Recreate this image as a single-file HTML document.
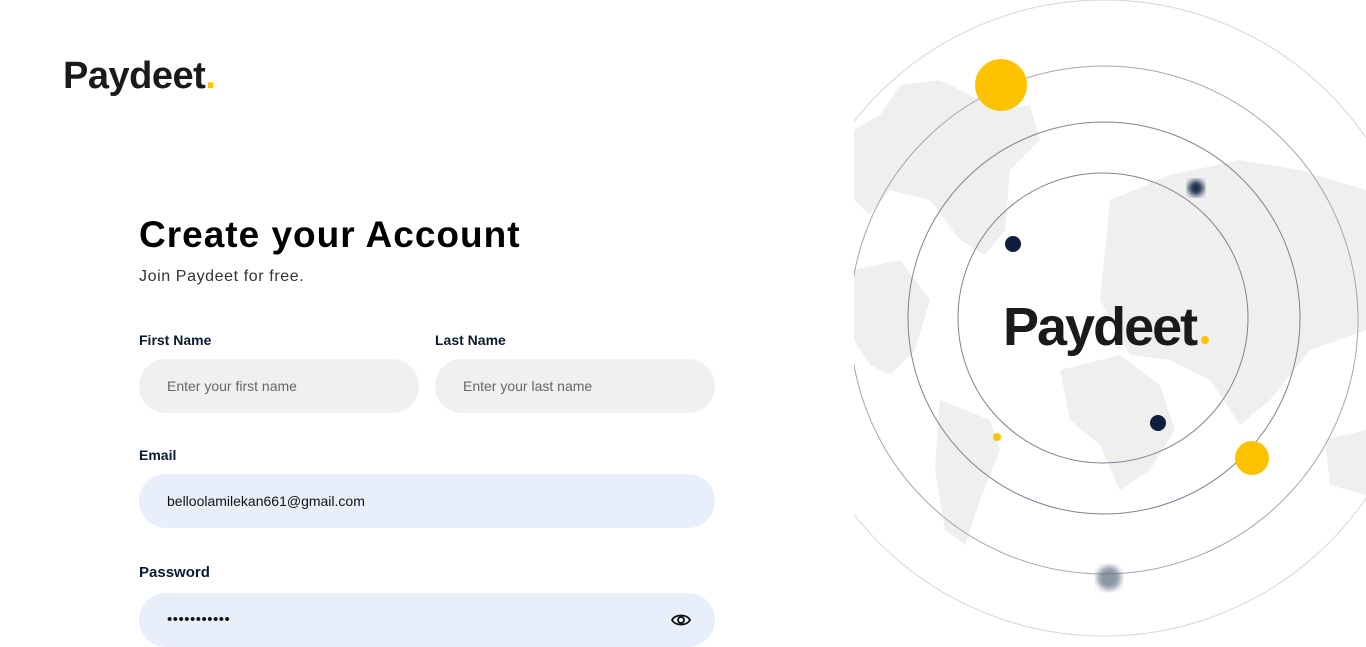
<!DOCTYPE html>
<html><head><meta charset="utf-8"><style>
*{margin:0;padding:0;box-sizing:border-box}
body{width:1366px;height:639px;overflow:hidden;background:#fff;font-family:"Liberation Sans",sans-serif;position:relative}
.logo{position:absolute;left:63px;top:55px;font-size:38px;font-weight:700;color:#1a1a1a;letter-spacing:-0.5px}
.logo span{color:#fdc300}
h1{position:absolute;left:139px;top:214px;font-size:37px;font-weight:700;color:#000;letter-spacing:1px}
.sub{position:absolute;left:139px;top:268px;font-size:16px;color:#333;letter-spacing:0.6px}
.lbl{position:absolute;font-size:14px;font-weight:700;color:#0a1a33}
.inp{position:absolute;height:54px;border-radius:27px;background:#f0f0f0;font-size:14px;color:#666;padding-left:28px;line-height:54px}
.blue{background:#e8effb;color:#111}
</style></head><body>
<div class="logo">Paydeet<span>.</span></div>
<h1>Create your Account</h1>
<div class="sub">Join Paydeet for free.</div>
<div class="lbl" style="left:139px;top:332px">First Name</div>
<div class="lbl" style="left:435px;top:332px">Last Name</div>
<div class="inp" style="left:139px;top:359px;width:280px">Enter your first name</div>
<div class="inp" style="left:435px;top:359px;width:280px">Enter your last name</div>
<div class="lbl" style="left:139px;top:447px">Email</div>
<div class="inp blue" style="left:139px;top:474px;width:576px">belloolamilekan661@gmail.com</div>
<div class="lbl" style="left:139px;top:564px;font-size:15px">Password</div>
<div class="inp blue" style="left:139px;top:593px;width:576px;font-size:15px;letter-spacing:0.5px">•••••••••••
<svg style="position:absolute;right:24px;top:18px" width="20" height="18" viewBox="0 0 20 18"><path d="M1 9C4 3 16 3 19 9C16 15 4 15 1 9Z" fill="none" stroke="#111" stroke-width="1.8"/><circle cx="10" cy="9" r="3" fill="none" stroke="#111" stroke-width="1.8"/></svg></div>
<svg style="position:absolute;left:854px;top:0" width="512" height="639" viewBox="854 0 512 639">
<defs><filter id="b"><feGaussianBlur stdDeviation="3"/></filter></defs>
<g fill="#efefef">
<path d="M900 85 L940 80 L1000 110 L1030 105 L1040 140 L1010 170 L1005 230 L985 255 L960 240 L930 200 L890 190 L870 215 L854 200 L854 130 L880 115Z"/>
<path d="M854 270 L900 260 L930 300 L915 350 L890 375 L870 365 L854 340Z"/>
<path d="M940 400 L990 420 L1000 450 L980 500 L965 545 L945 530 L935 470Z"/>
<path d="M1110 200 L1170 175 L1240 160 L1300 170 L1366 190 L1366 330 L1310 350 L1270 400 L1240 425 L1210 380 L1170 360 L1130 355 L1100 300Z"/>
<path d="M1060 370 L1120 355 L1160 385 L1175 430 L1150 470 L1120 490 L1100 445 L1070 420Z"/>
<path d="M1325 440 L1366 430 L1366 495 L1330 485Z"/>
</g>
<g fill="none">
<circle cx="1103" cy="318" r="145" stroke="#7b8494" stroke-width="1"/>
<circle cx="1104" cy="318" r="196" stroke="#7b8494" stroke-width="1"/>
<circle cx="1104" cy="320" r="254" stroke="#a0a7b2" stroke-width="1"/>
<circle cx="1104" cy="318" r="318" stroke="#d3d6db" stroke-width="1"/>
</g>
<circle cx="1001" cy="85" r="26" fill="#fdc300"/>
<circle cx="1252" cy="458" r="17" fill="#fdc300"/>
<circle cx="997" cy="437" r="4" fill="#fdc300"/>
<circle cx="1013" cy="244" r="8" fill="#0d1f3d"/>
<circle cx="1158" cy="423" r="8" fill="#0d1f3d"/>
<circle cx="1196" cy="188" r="8" fill="#1d2f4d" filter="url(#b)"/>
<circle cx="1109" cy="578" r="12" fill="#5a6a80" opacity=".7" filter="url(#b)"/>
<text x="1003" y="345" font-family="Liberation Sans" font-weight="700" font-size="54" fill="#1a1a1a" letter-spacing="-2">Paydeet</text>
<circle cx="1205" cy="340" r="4" fill="#fdc300"/>
</svg>
</body></html>
